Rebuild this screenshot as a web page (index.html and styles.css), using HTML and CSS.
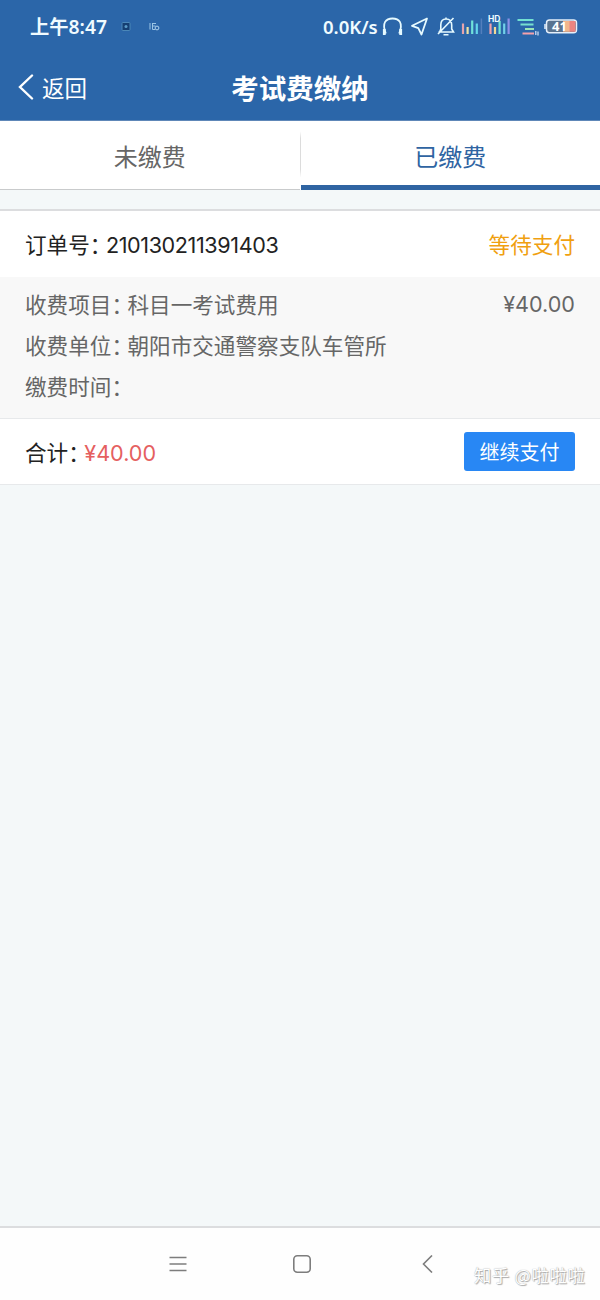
FILE: index.html
```html
<!DOCTYPE html>
<html lang="zh-CN">
<head>
    <meta charset="UTF-8">
    <meta name="viewport" content="width=device-width, initial-scale=1.0">
    <title>考试费缴纳</title>
    <link rel="stylesheet" href="styles.css">
</head>
<body>
    <div class="status-bar">
        <span class="time">上午8:47</span>
        <svg class="notice" width="42" height="12" viewBox="0 0 42 12" fill="none">
            <rect x="2" y="1.500" width="8" height="8" rx="1" fill="#153f72" stroke="#4b87b8"/>
            <circle cx="6" cy="5.500" r="1.500" fill="#5b9bc8"/>
            <path d="M30 2v6.500M32 2.500h4M32.500 2v6.500h2.500M32.500 5h3" stroke="#9cc6e6"/>
            <circle cx="37" cy="7" r="1.900" stroke="#b0d3ee"/>
        </svg>
        <div class="status-right">
            <span class="speed">0.0K/s</span>
            <svg width="199" height="28" viewBox="0 0 199 28" fill="none">
                <!-- 耳机 -->
                <path d="M5.800 20.500C1.500 9.500 6 5.500 12.500 5.500s11 4 6.700 15" stroke="#e6faff" stroke-width="1.800"/>
                <path d="M4.300 16v6M20.700 16v6" stroke="#e6faff" stroke-width="2.800"/>
                <!-- 定位 -->
                <path d="M47 5.500 32 12.800l6.300 2.400 3.200 6.300Z" stroke="#e6faff" stroke-width="1.800" stroke-linejoin="round"/>
                <!-- 静音 -->
                <path d="M58.500 19h15l-1.800-3v-4c0-4-2-6-5.700-6s-5.200 2-5.200 6v4l-1.200 3M63.500 21.800h5M66 6V4.500M73.500 5 58 21" stroke="#e6faff" stroke-width="1.600"/>
                <!-- 信号 -->
                <g stroke-width="2.200">
                    <path d="M83 10.500v10.500" stroke="#e5a4ad"/>
                    <path d="M87.600 14v7" stroke="#efe3a5"/>
                    <path d="M92.200 7.500v13.500" stroke="#70e2d9"/>
                    <path d="M96.800 10.500v10.500" stroke="#65d5e9"/>
                    <path d="M101.400 5.500v15.500" stroke="#537fbd" stroke-width="1.500"/>
                    <path d="M110.500 10.500v10.500" stroke="#f1a1ac"/>
                    <path d="M115 14v7" stroke="#f0d997"/>
                    <path d="M119.600 8v13" stroke="#72e6d5"/>
                    <path d="M124.200 10.500v10.500" stroke="#71d1e9"/>
                    <path d="M128.600 5.500v15.500" stroke="#8d91e7"/>
                </g>
                <text class="hd" x="108" y="8.500">HD</text>
                <path d="M137.500 7h16" stroke="#72e1d2" stroke-width="2"/>
                <path d="M140.500 11.500h13" stroke="#77e0cf" stroke-width="2"/>
                <path d="M145 16h9" stroke="#9be5b6" stroke-width="2"/>
                <path d="M142.500 20.500h11.500" stroke="#f5a1aa" stroke-width="2"/>
                <path d="M155.800 18v4M158 18.500v4" stroke="#d6e4fa" stroke-width="1.200"/>
                <!-- 电池 -->
                <rect x="166.500" y="7" width="30" height="12.800" rx="3" fill="#59738f" stroke="#e5effa" stroke-width="1.500"/>
                <path d="M183 8h7v10.800h-7z" fill="#f1b58c"/>
                <path d="M189.500 8h6v10.800h-6z" fill="#ea8481"/>
                <path d="M165 11v5" stroke="#e5effa" stroke-width="1.500"/>
                <text class="battery" x="172" y="18">41</text>
            </svg>
        </div>
    </div>

    <header class="header">
        <a class="back">
            <svg width="16" height="26" viewBox="0 0 16 26" fill="none" stroke="#fff" stroke-width="2.400" stroke-linecap="round">
                <path d="M14 1.500 2 13l12 11.500"/>
            </svg>
            返回
        </a>
        <h1>考试费缴纳</h1>
    </header>

    <nav class="tabs">
        <a class="tab">未缴费</a>
        <a class="tab active">已缴费</a>
    </nav>

    <main class="content">
        <section class="order">
            <div class="order-head">
                <div><span class="label">订单号：</span><span class="number">210130211391403</span></div>
                <span class="state">等待支付</span>
            </div>
            <div class="order-body">
                <div class="row">
                    <div><span class="label">收费项目：</span>科目一考试费用</div>
                    <span class="price">¥40.00</span>
                </div>
                <div class="row"><div><span class="label">收费单位：</span>朝阳市交通警察支队车管所</div></div>
                <div class="row"><div><span class="label">缴费时间：</span></div></div>
            </div>
            <div class="order-foot">
                <div><span class="label">合计：</span><span class="price total">¥40.00</span></div>
                <button class="pay">继续支付</button>
            </div>
        </section>
    </main>

    <footer class="nav-bar">
        <svg class="nav-menu" width="18" height="16" viewBox="0 0 18 16" stroke="#7d7d7d" stroke-width="1.600">
            <path d="M.5 1.500h17M.5 8h17M.5 14.500h17"/>
        </svg>
        <svg class="nav-home" width="18" height="18" viewBox="0 0 18 18" fill="none" stroke="#7d7d7d" stroke-width="1.600">
            <rect x=".8" y=".8" width="16.400" height="16.400" rx="3.500"/>
        </svg>
        <svg class="nav-back" width="11" height="18" viewBox="0 0 11 18" fill="none" stroke="#7d7d7d" stroke-width="1.600">
            <path d="M10 .5 1.500 9l8.500 8.500"/>
        </svg>
        <span class="watermark">知乎 @啦啦啦</span>
    </footer>
</body>
</html>
```

FILE: styles.css
```css
* {
    box-sizing: border-box;
}
body {
    margin: 0;
    height: 1300px;
    display: flex;
    flex-direction: column;
    font-family: 'Noto Sans CJK SC', sans-serif;
    font-size: 21.6px;
    color: #222;
    background-color: #f4f8f9;
}
.status-bar {
    display: flex;
    align-items: center;
    height: 54px;
    padding: 0 21px 0 30px;
    color: #f0fbff;
    background-color: #2b66a9;
}
.time {
    width: 90px;
    font-family: 'Noto Sans', 'Noto Sans CJK SC', sans-serif;
    font-size: 19.3px;
    font-weight: 600;
    line-height: 26px;
    white-space: nowrap;
}
.status-right {
    display: flex;
    align-items: center;
    margin-left: auto;
}
.speed {
    width: 57px;
    padding-bottom: 2px;
    font-family: 'Noto Sans', sans-serif;
    font-size: 18.5px;
    font-weight: 600;
}
.hd {
    font: bold 8.5px Inter, sans-serif;
    fill: #f0fbff;
}
.battery {
    font: bold 13px 'Noto Sans', sans-serif;
    fill: #fff;
}
.header {
    display: grid;
    grid-template-columns: 1fr auto 1fr;
    align-items: center;
    height: 67px;
    padding: 0 18px;
    color: #fff;
    background-color: #2b66a9;
    border-bottom: 1px solid #5e87b8;
}
.header h1 {
    margin: 0;
    font-size: 27.5px;
    font-weight: bold;
    line-height: 66px;
}
.back {
    display: flex;
    align-items: center;
    gap: 8px;
    font-size: 22.5px;
}
.tabs {
    display: flex;
    gap: 1px;
    height: 69px;
    background-color: #fff;
    /* 中间的渐变分隔线 */
    background-image: linear-gradient(transparent 15%, #dcdcdc 25%, #dcdcdc 70%, transparent 82%);
    background-size: 1px 100%;
    background-position: 300px 0;
    background-repeat: no-repeat;
}
.tab {
    flex: 1;
    font-size: 24px;
    line-height: 69px;
    text-align: center;
    color: #666;
    border-bottom: 1px solid #c9cbcc;
}
.tab.active {
    color: #2f64a2;
    border-bottom: 5px solid #2f64a2;
}
.content {
    flex: 1;
    padding-top: 19px;
}
.order {
    background-color: #fff;
    border-top: 2px solid #dcdddf;
    border-bottom: 1px solid #e7e9eb;
}
.order-head,
.order-foot,
.row {
    display: flex;
    justify-content: space-between;
    align-items: center;
    padding: 0 25px;
    white-space: nowrap;
}
.order-head {
    height: 66px;
    padding-bottom: 2px;
}
.label {
    margin-right: -5.5px;
}
.number {
    font-family: Inter, sans-serif;
    letter-spacing: -0.4px;
}
.state {
    color: #f0a010;
}
.order-body {
    height: 142px;
    padding-top: 6px;
    color: #666;
    background-color: #f8f8f8;
    border-bottom: 1px solid #e7e9eb;
}
.row {
    height: 41px;
}
.price {
    font-family: Inter, sans-serif;
}
.order-foot {
    height: 65px;
}
.total {
    color: #e5605f;
}
.pay {
    width: 111px;
    height: 39px;
    padding: 0;
    border: none;
    border-radius: 3px;
    font-family: inherit;
    font-size: 20px;
    color: #fff;
    background-color: #2887f4;
}
.nav-bar {
    display: flex;
    align-items: center;
    height: 74px;
    padding-left: 169px;
    background-color: #fefefe;
    border-top: 2px solid #dcdddf;
}
.nav-home {
    margin-left: 106px;
}
.nav-back {
    margin-left: 111px;
}
.watermark {
    margin: 20px 0 0 41px;
    font-size: 17.3px;
    letter-spacing: 0.7px;
    white-space: nowrap;
    color: #fff;
    text-shadow: 0 0 1px #999, 1px 1px 1px #aaa;
}
```
